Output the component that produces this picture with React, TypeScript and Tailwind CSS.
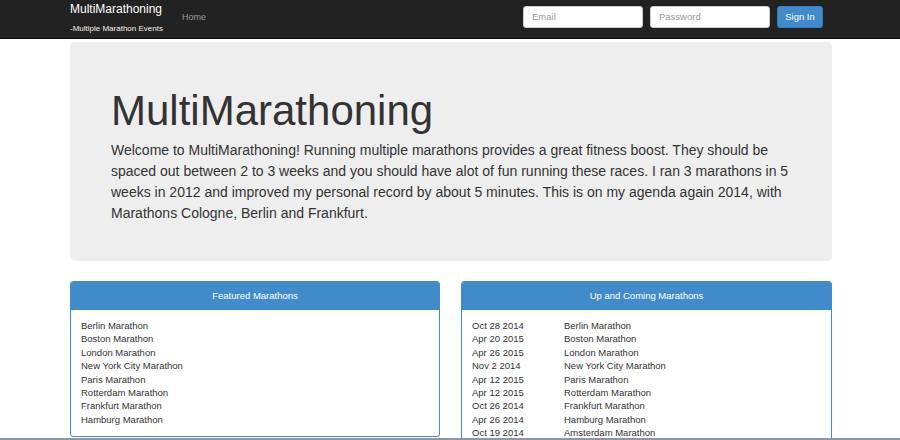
import React from "react";

const featured = [
  "Berlin Marathon",
  "Boston Marathon",
  "London Marathon",
  "New York City Marathon",
  "Paris Marathon",
  "Rotterdam Marathon",
  "Frankfurt Marathon",
  "Hamburg Marathon",
];

const upcoming: [string, string][] = [
  ["Oct 28 2014", "Berlin Marathon"],
  ["Apr 20 2015", "Boston Marathon"],
  ["Apr 26 2015", "London Marathon"],
  ["Nov 2 2014", "New York City Marathon"],
  ["Apr 12 2015", "Paris Marathon"],
  ["Apr 12 2015", "Rotterdam Marathon"],
  ["Oct 26 2014", "Frankfurt Marathon"],
  ["Apr 26 2014", "Hamburg Marathon"],
  ["Oct 19 2014", "Amsterdam Marathon"],
];

export default function App() {
  return (
    <div
      className="relative w-[900px] h-[440px] overflow-hidden bg-white flex flex-col"
      style={{ fontFamily: '"Liberation Sans", Arial, sans-serif' }}
    >
      <nav className="h-[39px] shrink-0 bg-[#222222] border-b border-[#080808]">
        <div className="w-[762px] ml-[70px] flex items-start">
          <div className="w-[112px] flex flex-col pt-[1px]">
            <span className="text-[12px] leading-[16px] text-white">MultiMarathoning</span>
            <span className="text-[8px] leading-[11px] mt-[6px] text-[#fbefe4]">-Multiple Marathon Events</span>
          </div>
          <span className="mt-[12px] text-[9px] leading-[11px] text-[#999999]">Home</span>
          <div className="ml-auto mr-[9px] mt-[6px] flex gap-[7px]">
            <div className="w-[120px] h-[22px] bg-white rounded-[3px] border border-[#cccccc] px-[8px] flex items-center text-[9.5px] text-[#999999]">Email</div>
            <div className="w-[120px] h-[22px] bg-white rounded-[3px] border border-[#cccccc] px-[8px] flex items-center text-[9.5px] text-[#999999]">Password</div>
            <div className="w-[46px] h-[22px] bg-[#428bca] rounded-[3px] border border-[#357ebd] flex items-center justify-center text-[9.5px] text-white">Sign In</div>
          </div>
        </div>
      </nav>
      <div className="w-[762px] ml-[70px]">
        <div className="mt-[3px] h-[219px] bg-[#eeeeee] rounded-[5px] pl-[41px] pr-[40px] pt-[45px]">
          <h1 className="text-[42px] leading-[48px] text-[#333333] font-normal">MultiMarathoning</h1>
          <p className="mt-[5px] text-[14px] leading-[21px] text-[#333333]">
            Welcome to MultiMarathoning! Running multiple marathons provides a great fitness boost. They should be
            spaced out between 2 to 3 weeks and you should have alot of fun running these races. I ran 3 marathons in 5
            weeks in 2012 and improved my personal record by about 5 minutes. This is on my agenda again 2014, with
            Marathons Cologne, Berlin and Frankfurt.
          </p>
        </div>
        <div className="mt-[20px] flex gap-[21px] items-start">
          <div className="w-[370px] border border-[#428bca] rounded-[3px] overflow-hidden">
            <div className="h-[28px] bg-[#428bca] flex items-center justify-center text-[9.5px] text-white">Featured Marathons</div>
            <div className="px-[10px] pt-[9px] pb-[10px] text-[9.5px] leading-[13.4px] text-[#333333]">
              {featured.map((f) => (
                <div key={f}>{f}</div>
              ))}
            </div>
          </div>
          <div className="w-[371px] border border-[#428bca] rounded-[3px] overflow-hidden">
            <div className="h-[28px] bg-[#428bca] flex items-center justify-center text-[9.5px] text-white">Up and Coming Marathons</div>
            <div className="px-[10px] pt-[9px] pb-[10px] text-[9.5px] leading-[13.4px] text-[#333333]">
              {upcoming.map(([d, n], i) => (
                <div key={i} className="flex">
                  <span className="w-[92px]">{d}</span>
                  <span>{n}</span>
                </div>
              ))}
            </div>
          </div>
        </div>
      </div>
      <div className="absolute bottom-0 left-0 w-full h-[2px] bg-[#8d96a3]" />
    </div>
  );
}
